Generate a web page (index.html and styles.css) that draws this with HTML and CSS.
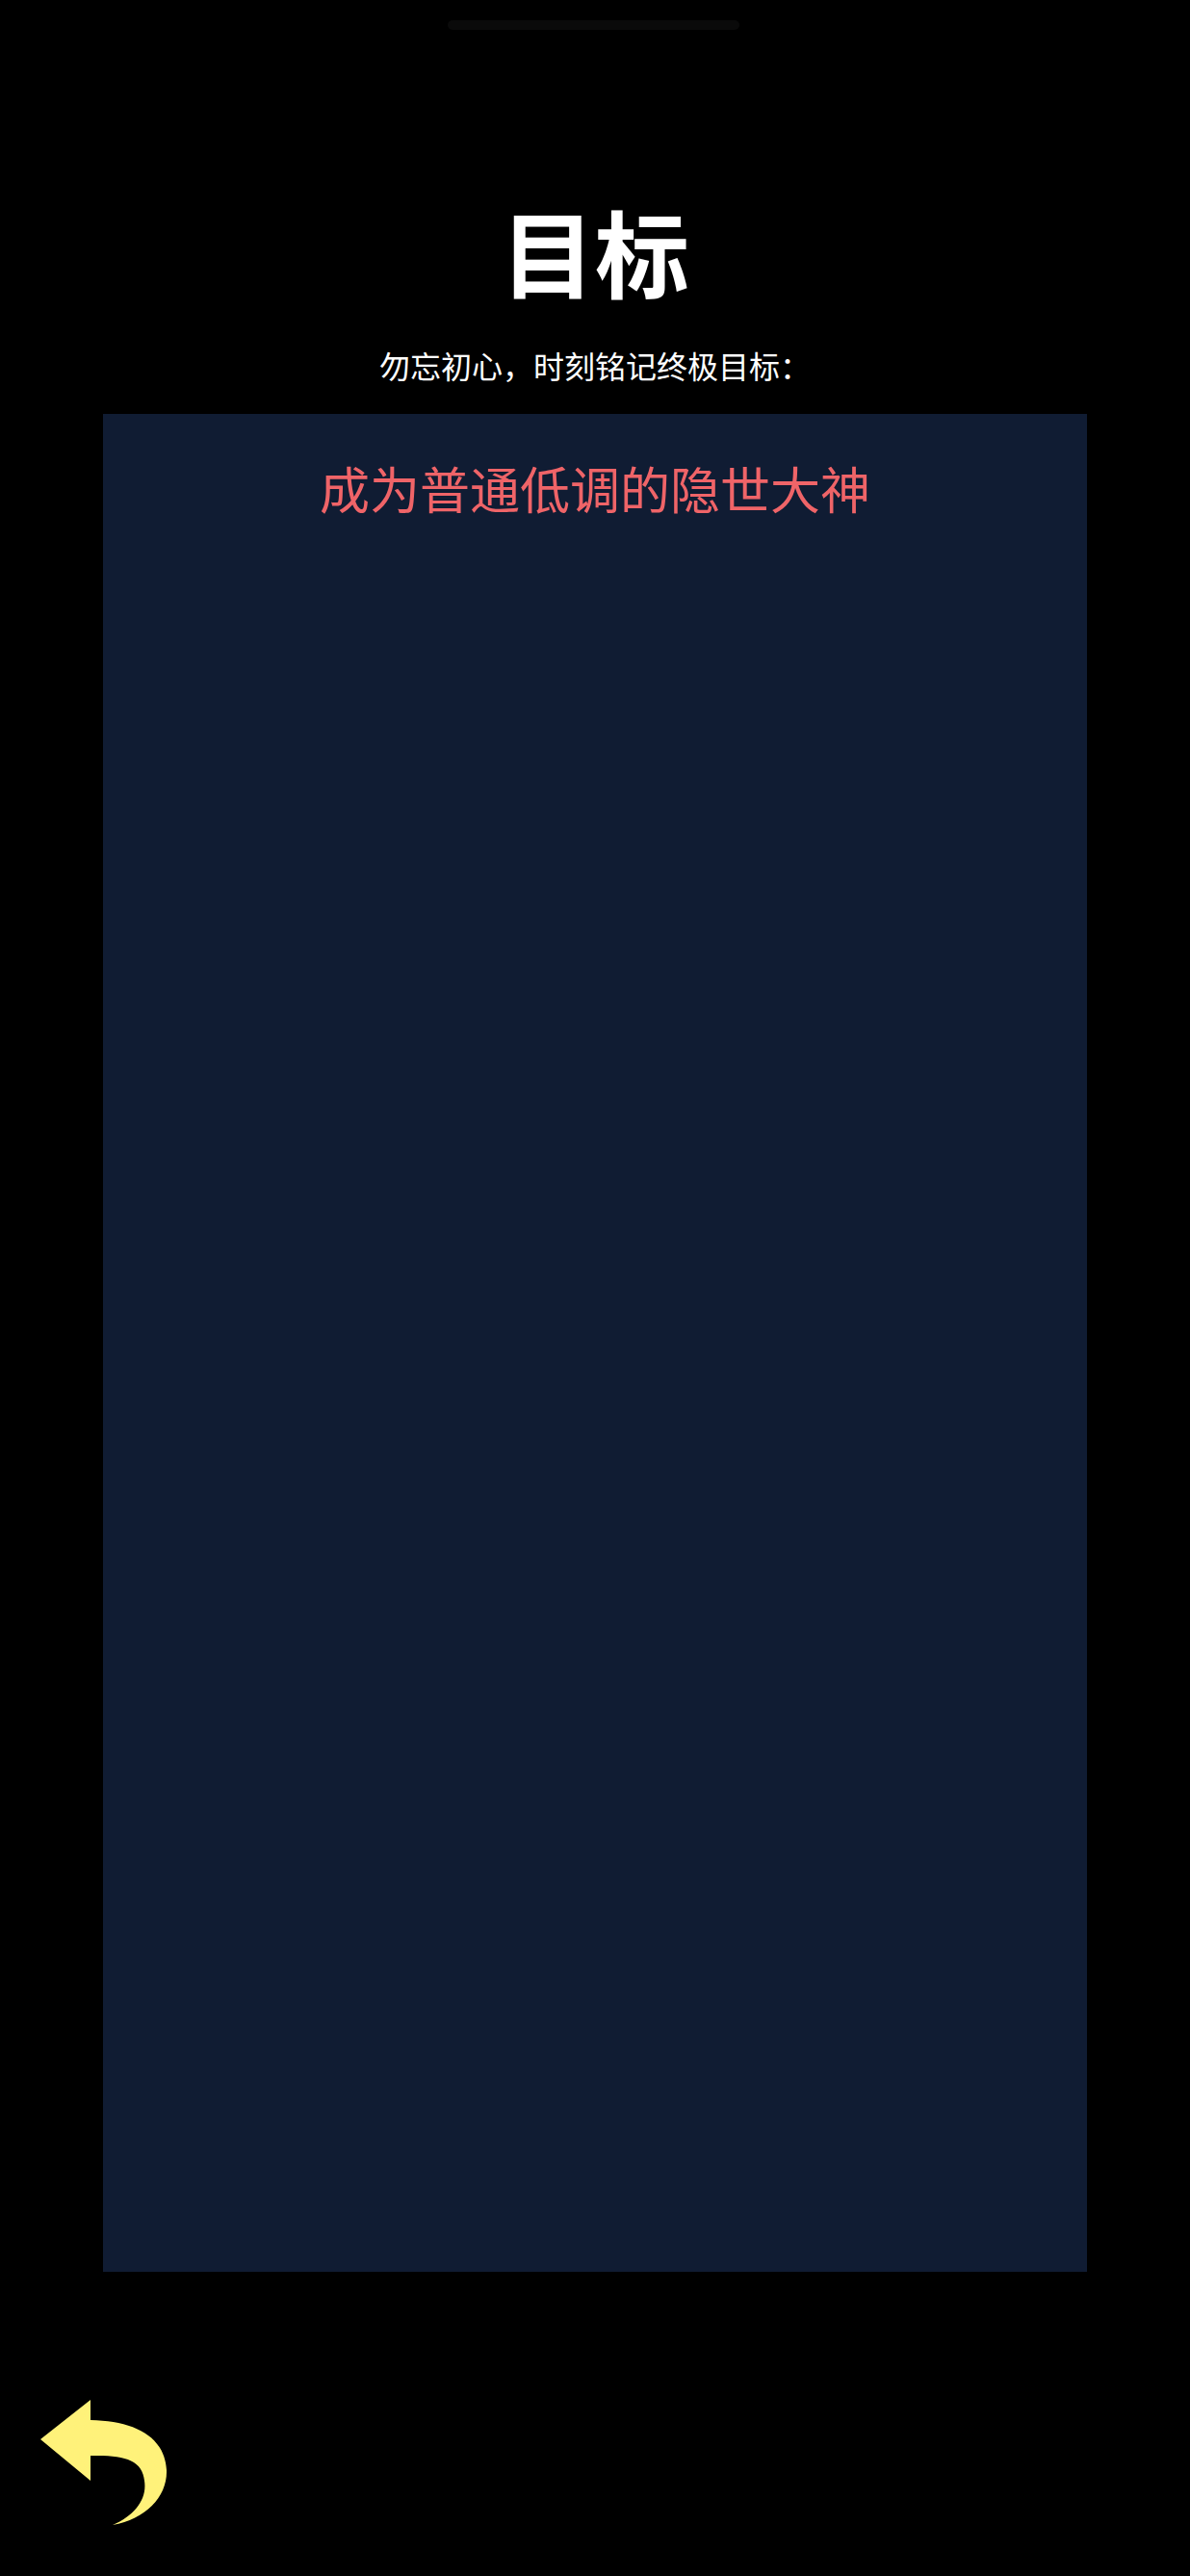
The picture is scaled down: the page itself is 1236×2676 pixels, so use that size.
FILE: index.html
```html
<!DOCTYPE html>
<html lang="zh-CN">
<head>
    <meta charset="UTF-8">
    <meta name="viewport" content="width=device-width, initial-scale=1.0">
    <title>目标</title>
    <link rel="stylesheet" href="styles.css">
</head>
<body>
    <div class="notch-bar"></div>
    <h1 class="page-title">目标</h1>
    <p class="page-subtitle">勿忘初心，时刻铭记终极目标：</p>
    <main class="goal-panel">
        <p class="goal-text">成为普通低调的隐世大神</p>
    </main>
    <a href="#" class="back-link" aria-label="返回">
        <svg class="back-icon" viewBox="0 0 140 136" width="140" height="136">
            <path d="M2 41 L54 0 L54 21 C100 22 131 38 133 73 C134 100 112 124 77 130 C100 120 113 103 110 84 C108 62 88 57 54 58 L54 84 Z" />
        </svg>
    </a>
</body>
</html>
```

FILE: styles.css
```css
html, body { height: 100%; }
body { margin: 0; background-color: #000; color: #fff; font-family: "Noto Sans CJK SC", "Noto Sans", sans-serif; display: flex; flex-direction: column; align-items: center; }
.notch-bar { width: 303px; height: 10px; margin: 21px 3px 0 0; background-color: #0a0a0a; border-radius: 5px; }
.page-title { margin: 175px 0 0; font-size: 98px; line-height: 106px; font-weight: 700; }
.page-subtitle { margin: 44px 0 0; font-size: 32px; line-height: 46px; }
.goal-panel { width: 1022px; height: 1930px; margin-top: 28px; background-color: #101c33; box-sizing: border-box; padding-top: 42px; }
.goal-text { margin: 0; text-align: center; font-size: 52px; line-height: 70px; color: #ef6468; }
.back-link { display: block; align-self: flex-start; margin: 133px 0 0 40px; height: 136px; }
.back-icon { display: block; fill: #fff27a; }
```
